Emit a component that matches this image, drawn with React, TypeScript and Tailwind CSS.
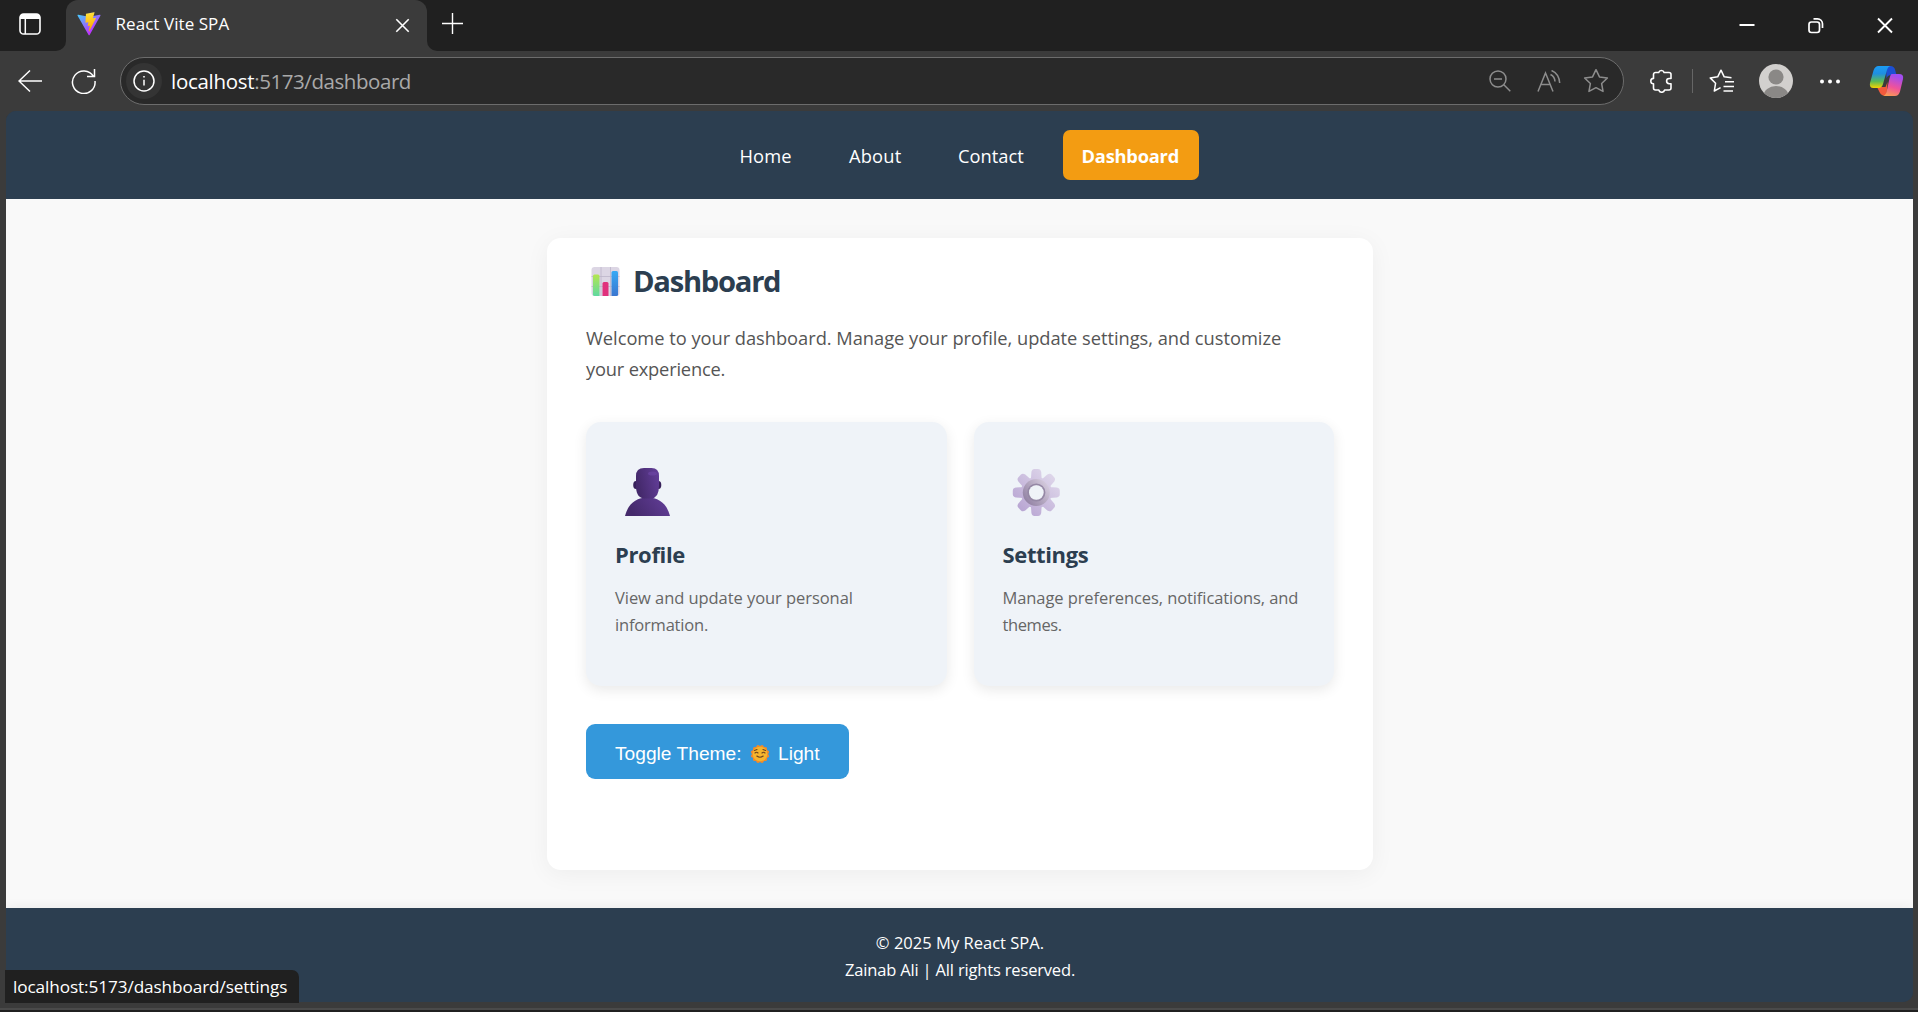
import React from "react";

function TitleBar() {
  return (
    <div className="flex h-[51px] bg-[#3b3b3b] text-white">
      <div className="flex w-[66px] rounded-br-[10px] bg-[#202020] pt-[13px] pl-[19px]">
        <svg width="22" height="22" viewBox="0 0 22 22" fill="none">
          <rect x="1" y="1" width="20" height="20" rx="3.6" stroke="#fff" strokeWidth="1.6" />
          <path d="M1 6V4.5A3.5 3.5 0 0 1 4.500 1h13A3.500 3.500 0 0 1 21 4.500V6z" fill="#fff" />
          <path d="M6.300 6v15" stroke="#fff" strokeWidth="1.500" />
        </svg>
      </div>
      <div className="bg-[#202020]">
        <div className="flex h-[51px] w-[361px] items-center rounded-t-[12px] bg-[#3b3b3b] pr-[17px] pb-[3px] pl-[11px]">
          <svg width="24" height="24" viewBox="0 0 410 404" fill="none">
            <defs>
              <linearGradient id="va" x1="6" y1="33" x2="235" y2="344" gradientUnits="userSpaceOnUse">
                <stop stopColor="#41D1FF" />
                <stop offset="1" stopColor="#BD34FE" />
              </linearGradient>
              <linearGradient id="vb" x1="194.6" y1="8.8" x2="236" y2="293" gradientUnits="userSpaceOnUse">
                <stop stopColor="#FFEA83" />
                <stop offset="0.083" stopColor="#FFDD35" />
                <stop offset="1" stopColor="#FFA800" />
              </linearGradient>
            </defs>
            <path fill="url(#va)" d="M399.641 59.5246L215.643 388.545C211.844 395.338 202.084 395.378 198.228 388.618L10.5817 59.5563C6.38087 52.1896 12.6802 43.2665 21.0281 44.7586L205.223 77.6824C206.398 77.8924 207.601 77.8904 208.776 77.6763L389.119 44.8058C397.439 43.2894 403.768 52.1434 399.641 59.5246Z" />
            <path fill="url(#vb)" d="M292.965 1.5744L156.801 28.2552C154.563 28.6937 152.906 30.5903 152.771 32.8664L144.395 174.33C144.198 177.662 147.258 180.248 150.51 179.498L188.42 170.749C191.967 169.931 195.172 173.055 194.443 176.622L183.18 231.775C182.422 235.487 185.907 238.661 189.532 237.56L212.947 230.446C216.577 229.344 220.065 232.527 219.297 236.242L201.398 322.875C200.278 328.294 207.486 331.249 210.492 326.603L212.5 323.5L323.454 102.072C325.312 98.3645 322.108 94.137 318.036 94.9228L279.014 102.454C275.347 103.161 272.227 99.746 273.262 96.1583L298.731 7.86689C299.767 4.27314 296.636 0.855181 292.965 1.5744Z" />
          </svg>
          <span className="ml-[14.500px] text-[17px] tracking-[0.060px]">React Vite SPA</span>
          <svg className="mt-[2px] ml-auto" width="15" height="15" viewBox="0 0 15 15" stroke="#fff" strokeWidth="1.600">
            <path d="M1.300 1.300l12.400 12.400M13.700 1.300L1.300 13.700" />
          </svg>
        </div>
      </div>
      <div className="flex flex-1 rounded-bl-[10px] bg-[#202020] pl-[15px]">
        <svg className="mt-[13px]" width="21" height="21" viewBox="0 0 21 21" stroke="#fff" strokeWidth="1.400">
          <path d="M10.500 0v21M0 10.500h21" />
        </svg>
        <div className="mt-[17px] mr-[25px] ml-auto flex h-[17px] gap-[53px]">
          <svg width="16" height="17" viewBox="0 0 16 17" stroke="#fff" strokeWidth="2">
            <path d="M.5 8h15" />
          </svg>
          <svg width="16" height="17" viewBox="0 0 16 17" fill="none" stroke="#fff" strokeWidth="1.700">
            <rect x="1" y="5" width="10.500" height="10.500" rx="2.400" />
            <path d="M5.500 1.800h4a5 5 0 0 1 5 5V11" />
          </svg>
          <svg width="16" height="17" viewBox="0 0 16 17" stroke="#fff" strokeWidth="1.900">
            <path d="M1 1.500l14 14M15 1.500l-14 14" />
          </svg>
        </div>
      </div>
    </div>
  );
}

const STAR = "M12 1.500l3.200 6.700 7.300 1-5.300 5.100 1.300 7.300-6.500-3.500-6.500 3.500 1.300-7.300L1.500 9.200l7.300-1z";

function Toolbar() {
  return (
    <div className="flex h-[60px] items-center bg-[#3b3b3b] pb-px pl-[18px]">
      <svg width="25" height="24" viewBox="0 0 25 24" fill="none" stroke="#fff" strokeWidth="1.500">
        <path d="M24 12H1M12 1.500L1 12l11 10.500" />
      </svg>
      <svg className="ml-[28px]" width="26" height="26" viewBox="0 0 26 26" fill="none" stroke="#fff" strokeWidth="1.500">
        <path d="M22.500 8.500A11.300 11.300 0 1 0 24 13M23.500 1v7.500h-7.500" />
      </svg>
      <div className="ml-[23px] flex h-[48px] w-[1504px] items-center rounded-full border border-[#6c6c6c] bg-[#292929] pr-[14px] pl-[5px]">
        <div className="flex size-9 items-center justify-center rounded-full bg-[#343434]">
          <svg width="22" height="22" viewBox="0 0 22 22" fill="none" stroke="#fff" strokeWidth="1.500">
            <circle cx="11" cy="11" r="10" />
            <path d="M11 9.800v5.700" />
            <circle cx="11" cy="6.800" r=".5" fill="#fff" strokeWidth="1" />
          </svg>
        </div>
        <div className="ml-[9px] pt-[2px] text-[20.500px] whitespace-nowrap">
          <span className="tracking-[-0.300px] text-white">localhost</span>
          <span className="tracking-[-0.430px] text-[#a9a9a9]">:5173/dashboard</span>
        </div>
        <svg className="ml-auto" width="22" height="22" viewBox="0 0 22 22" fill="none" stroke="#8d8d8d" strokeWidth="1.500">
          <circle cx="9" cy="9" r="8" />
          <path d="M5 9h8M14.800 14.800L21.300 21.300" />
        </svg>
        <svg className="ml-[26px]" width="24" height="22" viewBox="0 0 24 22" fill="none" stroke="#8d8d8d" strokeWidth="1.500">
          <path d="M1 21.500L8.500 3l7.500 18.500M4 14.500h9M14.500 .5q7.500 3 8.200 12.500M13.500 4.500q4.200 2 4.500 7" />
        </svg>
        <svg className="ml-[22px]" width="26" height="25" viewBox="0 0 24 23" fill="none" stroke="#8d8d8d" strokeWidth="1.400" strokeLinejoin="round">
          <path d={STAR} />
        </svg>
      </div>
      <svg className="ml-[26px]" width="22" height="24" viewBox="0 0 22 24" fill="none" stroke="#fff" strokeWidth="1.600" strokeLinejoin="round">
        <path d="M5.500 3.500h3.200a2.800 2.800 0 0 1 5.400 0H19a2 2 0 0 1 2 2v4h-1.800a2.600 2.600 0 0 0 0 5.200H21V19a2 2 0 0 1-2 2h-4.400a3 3 0 0 1-5.800 0H5.500a2 2 0 0 1-2-2v-4.200a2.700 2.700 0 0 1 0-5.400V5.500a2 2 0 0 1 2-2z" />
      </svg>
      <div className="ml-[20px] h-6 w-px bg-[#666]" />
      <svg className="ml-[16px]" width="25" height="24" viewBox="0 0 25 24" fill="none" stroke="#fff" strokeWidth="1.500" strokeLinejoin="round">
        <path d="M22.500 8.800l-7.300-1L12 1.200 8.700 7.800l-7.500 1.100 5.400 5.300-1.300 7.800 6.300-3.300M16 12.700h9M14.500 17.500H25" />
        <path d="M14.500 22H24" />
      </svg>
      <svg className="ml-[25px]" width="34" height="34" viewBox="0 0 34 34">
        <clipPath id="av"><circle cx="17" cy="17" r="17" /></clipPath>
        <g clipPath="url(#av)">
          <rect width="34" height="34" fill="#d2d0ce" />
          <circle cx="17" cy="13" r="7.600" fill="#8a8886" />
          <ellipse cx="17" cy="32" rx="12.500" ry="10" fill="#8a8886" />
        </g>
      </svg>
      <svg className="ml-[26px]" width="22" height="6" viewBox="0 0 22 6" fill="#fff">
        <circle cx="3" cy="3.500" r="2" />
        <circle cx="11" cy="3.500" r="2" />
        <circle cx="19" cy="3.500" r="2" />
      </svg>
      <svg className="ml-[28px]" width="35" height="32" viewBox="0 0 35 32">
        <defs>
          <linearGradient id="ca" x1="0" y1="0" x2="0" y2="1">
            <stop stopColor="#1b9df5" />
            <stop offset=".35" stopColor="#1f8fe0" />
            <stop offset=".7" stopColor="#5dbb55" />
            <stop offset="1" stopColor="#f5d400" />
          </linearGradient>
          <linearGradient id="cb" x1=".3" y1="0" x2="0" y2="1">
            <stop stopColor="#a34df0" />
            <stop offset=".5" stopColor="#f0529a" />
            <stop offset="1" stopColor="#fba848" />
          </linearGradient>
        </defs>
        <path d="M17 1h4.500q3.500 0 4.500 3.500L27.500 10H22q-3.500 0-4.500 3.500z" fill="#1c4fd4" />
        <path d="M8 22h8.500l2-5-1 14q-5 0-6.500-3z" fill="#f25a3c" />
        <path d="M9.500 1h12q-2.500.5-3.500 4l-4 14q-1 4-4.500 4H4.500Q0 23 1 18L4.500 5.500Q6 1 9.500 1z" fill="url(#ca)" />
        <path d="M22.500 9H30q5 0 4 5l-3 12.500q-1.500 4.500-5 4.500H14q2.500-.5 3.500-4l3-13.500Q21.300 9.500 22.500 9z" fill="url(#cb)" />
      </svg>
    </div>
  );
}

const link = "flex h-[50px] items-center rounded-[7px] pt-[2px]";

function NavBar() {
  return (
    <nav className="flex h-[88px] shrink-0 items-center bg-[#2c3e50] pl-[716px] text-[18.300px] text-white">
      <a className={`${link} w-[112px] pl-[17.500px] tracking-[0.100px]`}>Home</a>
      <a className={`${link} w-[110px] pl-[15px] tracking-[0.180px]`}>About</a>
      <a className={`${link} w-[119px] pl-[14px] tracking-[0.020px]`}>Contact</a>
      <a className={`${link} w-[136px] bg-[#f39c12] pl-[18.500px] font-bold tracking-[-0.220px]`}>Dashboard</a>
    </nav>
  );
}

function ChartIcon() {
  return (
    <svg width="29" height="29" viewBox="0 0 28 29">
      <defs>
        <linearGradient id="g1" x1="0" y1="0" x2="0" y2="1"><stop stopColor="#b4e650" /><stop offset="1" stopColor="#5fd9a0" /></linearGradient>
        <linearGradient id="g2" x1="0" y1="0" x2="0" y2="1"><stop stopColor="#35a9f5" /><stop offset="1" stopColor="#3b76cf" /></linearGradient>
      </defs>
      <rect width="28" height="29" rx="3" fill="#dcd6e4" />
      <path d="M9.500 0v29M19 0v29M0 9.500h28M0 19.500h28" stroke="#bdb5c9" strokeWidth=".8" />
      <path d="M1.500 9q0-1.500 1.500-1.500h3.500q1.500 0 1.500 1.500v20H3q-1.500 0-1.500-1.500z" fill="url(#g1)" />
      <path d="M11 16.500q0-1.500 1.500-1.500h3q1.500 0 1.500 1.500V29h-6z" fill="#e0307c" />
      <path d="M20 5.500Q20 4 21.500 4H25q1.500 0 1.500 1.500v22q0 1.500-1.500 1.500h-5z" fill="url(#g2)" />
    </svg>
  );
}

function PersonIcon() {
  return (
    <svg width="58" height="58" viewBox="0 0 58 58">
      <defs>
        <linearGradient id="p1" x1="0" y1=".3" x2="1" y2="0"><stop stopColor="#44296b" /><stop offset="1" stopColor="#643f9b" /></linearGradient>
      </defs>
      <ellipse cx="21" cy="22" rx="2.800" ry="4" fill="#37205a" />
      <ellipse cx="43.500" cy="22" rx="2.800" ry="4" fill="#37205a" />
      <path d="M10 53C13 41 21 34.500 32.500 34.500S52 41 55 53z" fill="url(#p1)" />
      <path d="M29 5h7.500Q44 5 44 13v10q0 12-8 12.500h-6.500Q21 35 21 23V13Q21 5 29 5z" fill="url(#p1)" />
      <ellipse cx="37.500" cy="10.500" rx="4.500" ry="2" fill="#7048a8" opacity=".6" />
    </svg>
  );
}

const TEETH = [0, 45, 90, 135, 180, 225, 270, 315];

function GearIcon() {
  return (
    <svg width="58" height="58" viewBox="0 0 58 58">
      <defs>
        <linearGradient id="s1" gradientUnits="userSpaceOnUse" x1="17" y1="46" x2="50" y2="12"><stop stopColor="#b9a6d3" /><stop offset="1" stopColor="#ded6ea" /></linearGradient>
        <linearGradient id="s2" x1="0" y1=".9" x2="1" y2=".1"><stop stopColor="#8b7a9e" /><stop offset=".5" stopColor="#b3a6bf" /><stop offset="1" stopColor="#dcd3e4" /></linearGradient>
        <mask id="hole"><rect width="58" height="58" fill="#fff" /><circle cx="33.300" cy="29.500" r="7.300" fill="#000" /></mask>
      </defs>
      <g mask="url(#hole)">
        <circle cx="33.300" cy="29.500" r="15.500" fill="url(#s1)" />
        <path
          fill="url(#s1)"
          d={TEETH.map((a) => {
            const t = (a * Math.PI) / 180;
            const at = (x: number, y: number) =>
              `${(33.3 + x * Math.cos(t) - y * Math.sin(t)).toFixed(2)} ${(29.5 + x * Math.sin(t) + y * Math.cos(t)).toFixed(2)}`;
            return `M${at(-5.4, -13)}L${at(-4.900, -20.5)}Q${at(-4.300, -23.5)} ${at(-1.8, -23.5)}L${at(1.8, -23.5)}Q${at(4.300, -23.5)} ${at(4.900, -20.5)}L${at(5.4, -13)}Z`;
          }).join("")}
        />
        <circle cx="33.300" cy="29.500" r="13.500" fill="url(#s2)" />
        <circle cx="33.300" cy="29.500" r="8.200" fill="none" stroke="#9588a5" strokeWidth="1.800" />
      </g>
    </svg>
  );
}

function SunIcon() {
  return (
    <svg width="20" height="20" viewBox="0 0 20 20">
      <g fill="#f28a2a">
        {[0, 30, 60].map((a) => (
          <rect key={a} x="3" y="3" width="14" height="14" rx="1.500" transform={`rotate(${a} 10 10)`} />
        ))}
      </g>
      <circle cx="10" cy="10" r="7.300" fill="#f5b52c" />
      <path d="M4.500 6.500l2.500-1M15.500 6.500l-2.500-1M5 9q1.500-1.600 3 0M12 9q1.500-1.600 3 0M6.800 12q3.200 2.500 6.400 0" fill="none" stroke="#6b4420" strokeWidth="1.100" strokeLinecap="round" />
    </svg>
  );
}

const card = "h-[264px] flex-1 rounded-[15px] bg-[#eff3f8] pt-[41px] pl-[29px] shadow-[0_4px_14px_rgba(0,0,0,0.09)]";

function Dashboard() {
  return (
    <section className="mx-auto h-[632px] w-[826px] rounded-[14px] bg-white px-[39px] shadow-[0_4px_24px_rgba(0,0,0,0.05)]">
      <h1 className="flex h-[84px] items-center gap-[13px] pt-[3px] pl-[5px] text-[29.200px] font-bold tracking-[-1.280px] text-[#2c3e50]">
        <ChartIcon />
        Dashboard
      </h1>
      <p className="pt-px text-[18.300px] leading-[30.700px] whitespace-nowrap text-[#555]">
        <span className="block tracking-[-0.030px]">Welcome to your dashboard. Manage your profile, update settings, and customize</span>
        <span className="block tracking-[-0.190px]">your experience.</span>
      </p>
      <div className="mt-[38px] flex gap-[27px]">
        <div className={card}>
          <PersonIcon />
          <h3 className="mt-4 h-[34px] text-[22px] leading-[34px] font-bold tracking-[-0.350px] text-[#2c3e50]">Profile</h3>
          <p className="mt-[13px] text-[16.500px] leading-[27px] text-[#666]">
            <span className="block tracking-[-0.060px]">View and update your personal</span>
            <span className="block tracking-[-0.190px]">information.</span>
          </p>
        </div>
        <div className={card}>
          <GearIcon />
          <h3 className="mt-4 h-[34px] text-[22px] leading-[34px] font-bold tracking-[-0.370px] text-[#2c3e50]">Settings</h3>
          <p className="mt-[13px] text-[16.500px] leading-[27px] text-[#666]">
            <span className="block tracking-[-0.090px]">Manage preferences, notifications, and</span>
            <span className="block tracking-[-0.400px]">themes.</span>
          </p>
        </div>
      </div>
      <button className="mt-[38px] flex h-[55px] w-[263px] items-center rounded-[9px] bg-[#3498db] pt-[4px] pl-[29px] font-['Liberation_Sans',Arial,sans-serif] text-[19.200px] text-white">
        <span className="w-[135px] text-left">Toggle Theme:</span>
        <SunIcon />
        <span className="ml-[8px]">Light</span>
      </button>
    </section>
  );
}

export default function App() {
  return (
    <div className="flex h-[1012px] w-[1918px] flex-col overflow-hidden bg-[#3b3b3b] font-['Open_Sans','Noto_Sans',sans-serif]">
      <TitleBar />
      <Toolbar />
      <div className="mr-[5px] ml-[6px] flex h-[891px] flex-col overflow-hidden rounded-t-[10px] rounded-br-[10px] bg-[#2c3e50]">
        <NavBar />
        <main className="flex-1 bg-[#f9f9f9] pt-[39px] pl-px">
          <Dashboard />
        </main>
        <footer className="h-[94px] bg-[#2c3e50] pt-[21px] pl-px text-center text-[16.500px] leading-[27px] text-white shadow-[0_-2px_10px_rgba(0,0,0,0.05)]">
          <p className="tracking-[0.020px]">© 2025 My React SPA.</p>
          <p className="tracking-[-0.170px]">Zainab Ali | All rights reserved.</p>
        </footer>
      </div>
      <div className="relative z-10 -mt-[32px] ml-[5px] flex h-[33px] w-[294px] shrink-0 items-center rounded-tr-[7px] bg-[#202020] pl-[8px] text-[17.200px] tracking-[-0.100px] whitespace-nowrap text-white">
        localhost:5173/dashboard/settings
      </div>
      <div className="mt-[5px] h-[2px] shrink-0 bg-[#4a4a4a]" />
      <div className="h-[2px] shrink-0 bg-[#202020]" />
    </div>
  );
}
